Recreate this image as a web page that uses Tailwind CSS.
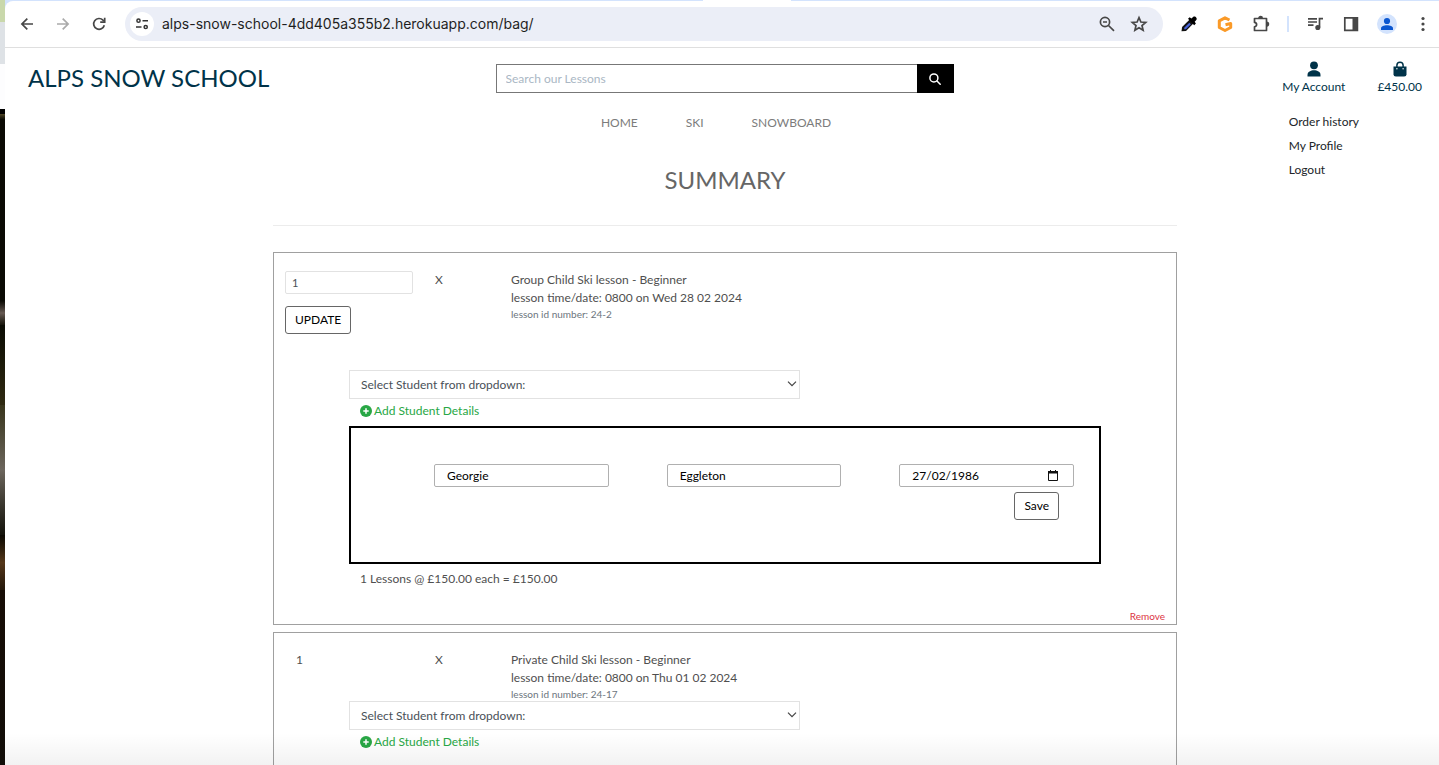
<!DOCTYPE html>
<html lang="en">
<head>
<meta charset="utf-8">
<title>Alps Snow School - Bag</title>
<script src="https://cdn.jsdelivr.net/npm/@tailwindcss/browser@4"></script>
</head>
<body class="flex h-screen overflow-hidden bg-white font-['Lato',sans-serif] text-xs leading-[18px] text-[#4f4f4f]">

<!-- Desktop showing behind the window -->
<div class="flex w-[5px] shrink-0 flex-col bg-black" aria-hidden="true">
  <div class="h-[22px] bg-[#c9d8ab]"></div>
  <div class="h-[42px] bg-[#dee2e6]"></div>
  <div class="h-[45px] bg-[#fdfdfe]"></div>
  <div class="h-[5px] bg-black"></div>
  <div class="flex-1 bg-linear-to-b from-[#4e4525] via-[#0b0a04] via-3% to-[#0a0a04]"></div>
  <div class="h-[24px] bg-linear-to-b from-[#0c0b06] via-[#675a53] to-[#17150c]"></div>
  <div class="h-[80px] bg-linear-to-b from-[#0b0c04] to-[#302a12]"></div>
  <div class="h-[130px] bg-linear-to-b from-[#39351c] via-[#6c665d] to-[#14130b]"></div>
  <div class="h-[55px] bg-linear-to-b from-[#0c0903] via-[#55371a] to-[#24170a]"></div>
  <div class="h-[175px] bg-linear-to-b from-[#170d06] to-[#110d08]"></div>
</div>

<div class="flex min-w-0 flex-1 flex-col">

  <!-- Browser toolbar -->
  <div class="flex h-px shrink-0 bg-[#d3e3fd]" aria-hidden="true">
    <div class="ml-[698px] h-px w-[88px] bg-white"></div>
  </div>
  <div class="shrink-0 bg-[#d3e3fd]">
  <div class="flex h-[47px] items-center rounded-tl-lg border-b border-[#dfdfdf] bg-white pr-[6px] text-[#474747]">
    <button aria-label="Back" class="ml-3 size-5"><svg viewBox="0 0 20 20" class="size-5" fill="none" stroke="#474747" stroke-width="1.700"><path d="M16 10H5M10.300 4.600 4.900 10l5.400 5.400"/></svg></button>
    <button aria-label="Forward" class="ml-4 size-5"><svg viewBox="0 0 20 20" class="size-5" fill="none" stroke="#ababab" stroke-width="1.700"><path d="M4 10h11M9.700 4.600 15.100 10l-5.400 5.400"/></svg></button>
    <button aria-label="Reload" class="ml-4 size-5"><svg viewBox="0 0 20 20" class="size-5" fill="none" stroke="#474747" stroke-width="1.700"><path d="M15.300 11.200A5.400 5.400 0 1 1 14 6.200l1 1"/><path d="M15.700 3.800v4.400h-4.500"/></svg></button>
    <div class="ml-4 flex h-[34px] flex-1 items-center rounded-full bg-[#ebeef7] pl-[5px] pr-[14px]">
      <button aria-label="View site information" class="flex size-6 shrink-0 items-center justify-center rounded-full bg-white"><svg viewBox="0 0 14 14" class="size-[14px]" fill="none" stroke="#333" stroke-width="1.500"><circle cx="3.500" cy="3.700" r="1.600"/><path d="M7.500 3.700H13M1 10h5.500"/><circle cx="10.700" cy="10" r="1.600"/></svg></button>
      <input aria-label="Address" value="alps-snow-school-4dd405a355b2.herokuapp.com/bag/" class="ml-2 min-w-0 flex-1 bg-transparent font-['Inter',sans-serif] text-sm text-[#1f1f1f] outline-none">
      <button aria-label="Zoom" class="mr-3 size-5"><svg viewBox="0 0 20 20" class="size-5" fill="none" stroke="#474747" stroke-width="1.700"><circle cx="8" cy="8" r="4.600"/><path d="m11.500 11.500 5.500 5.300M6 8h4"/></svg></button>
      <button aria-label="Bookmark this tab" class="size-5"><svg viewBox="0 0 20 20" class="size-5" fill="none" stroke="#474747" stroke-width="1.700"><path d="m10 3.600 1.900 4.400 4.800.4-3.700 3.100 1.100 4.700-4.100-2.500-4.100 2.500L7 11.500 3.300 8.400l4.800-.4z"/></svg></button>
    </div>
    <button aria-label="Colour picker" class="ml-4 size-5"><svg viewBox="0 0 20 20" class="size-5"><path d="m2.500 17.300.6-4.300 7.600-7.600 3.900 3.900-7.600 7.600z" fill="#111"/><path d="m5 15.300.5-1.800 4.800-4.800 1.600 1.600-5 5z" fill="#4763d8"/><path d="m9 4.800 1.700-1.600 1.700 1.200 1.700-1.400c1.900-1.500 4.700 1.300 3.200 3.100l-1.600 1.700 1.200 1.700-1.700 1.700z" fill="#000"/></svg></button>
    <button aria-label="Extension" class="ml-4 size-5"><svg viewBox="0 0 20 20" class="size-5" fill="none" stroke="#fa9a28" stroke-width="3" stroke-linejoin="round"><path d="M14.500 6 10 3.800 4.300 6.800v6.700l5.700 3 5.700-3V9.500l-5.200 1.300"/></svg></button>
    <button aria-label="Extensions" class="ml-4 size-5"><svg viewBox="0 0 20 20" class="size-5" fill="none" stroke="#474747" stroke-width="1.700" stroke-linejoin="round"><path d="M3.500 4.500h12v12h-12v-3.700c2.800-.4 2.800-4 0-4.400z"/><path d="M8 4.200a1.600 1.600 0 0 1 3.200 0M15.700 8.400a1.700 1.700 0 0 1 0 3.400" fill="#474747"/></svg></button>
    <span class="ml-4 h-4 w-0.5 bg-[#d3e3fd]"></span>
    <button aria-label="Media" class="ml-4 size-5"><svg viewBox="0 0 20 20" class="size-5" fill="none" stroke="#474747" stroke-width="1.700"><path d="M3 4.800h9M3 8h9M3 11.200h5.500M14.500 13.500V4.700H18"/><circle cx="12.800" cy="13.500" r="1.700" fill="#474747"/></svg></button>
    <button aria-label="Side panel" class="ml-4 size-5"><svg viewBox="0 0 20 20" class="size-5"><path d="M3.800 3.800h12.600v12.500H3.800z" fill="none" stroke="#474747" stroke-width="1.700"/><path d="M11.500 3.500h5v13h-5z" fill="#474747"/></svg></button>
    <button aria-label="Profile" class="ml-4 flex size-5 items-center justify-center rounded-full bg-[#d3e3fd]"><svg viewBox="0 0 20 20" class="size-5" fill="#0b57d0"><circle cx="10" cy="7" r="3.100"/><path d="M4 16v-1.700c0-4 12-4 12 0V16z"/></svg></button>
    <button aria-label="Menu" class="ml-4 size-5"><svg viewBox="0 0 20 20" class="size-5" fill="#474747"><circle cx="10" cy="4.500" r="1.600"/><circle cx="10" cy="10" r="1.600"/><circle cx="10" cy="15.500" r="1.600"/></svg></button>
  </div>
  </div>

  <div class="relative min-h-0 flex-1 overflow-hidden pl-[6px]">
    <header class="grid grid-cols-[1fr_458px_1fr] items-start pr-[17px]">
      <a href="#" class="mt-3 ml-[17px] text-2xl leading-9 text-[#003349]">ALPS SNOW SCHOOL</a>
      <form class="mt-4 ml-2 flex h-[29px] w-full border border-[#777]">
        <input type="search" aria-label="Search our Lessons" placeholder="Search our Lessons" class="min-w-0 flex-1 px-[9px] outline-none placeholder:text-[#aab7c4]">
        <button type="button" aria-label="Search" class="-my-px -mr-px flex w-[37px] items-center justify-center bg-black"><svg viewBox="0 0 12 12" class="size-3" fill="none" stroke="#fff" stroke-width="1.500" stroke-linecap="round"><circle cx="4.900" cy="4.900" r="4"/><path d="m8 8 3.200 3.200"/></svg></button>
      </form>
      <div class="mt-3 flex justify-end gap-8 text-[#003349]">
        <a href="#" class="flex flex-col items-center"><svg viewBox="0 0 14 16" class="my-px h-4 w-[14px]" fill="#003349"><circle cx="7" cy="4.300" r="3.900"/><path d="M.5 15.500v-1.500C.5 7.800 13.500 7.800 13.500 14v1.500z"/></svg>My Account</a>
        <a href="#" class="flex flex-col items-center"><svg viewBox="0 0 14 16" class="my-px h-4 w-[14px]"><path d="M.5 5.500h13v7.700a2.300 2.300 0 0 1-2.300 2.300H2.800A2.300 2.300 0 0 1 .5 13.200z" fill="#003349"/><path d="M3.900 7.500V4.300a3.100 3.100 0 0 1 6.200 0v3.200" fill="none" stroke="#003349" stroke-width="1.500"/><circle cx="3.900" cy="7.700" r=".7" fill="#fff"/><circle cx="10.100" cy="7.700" r=".7" fill="#fff"/></svg>£450.00</a>
      </div>
    </header>

    <ul class="absolute top-[62px] right-20 leading-6 text-[#212529]">
      <li><a href="#">Order history</a></li>
      <li><a href="#">My Profile</a></li>
      <li><a href="#">Logout</a></li>
    </ul>

    <nav class="mt-[18px] mr-[18px] flex justify-center gap-12 text-[#7c7c7c]">
      <a href="#">HOME</a><a href="#">SKI</a><a href="#">SNOWBOARD</a>
    </nav>

    <main class="mx-auto w-full max-w-[904px]">
      <h1 class="mt-[30px] text-center text-2xl leading-9 text-[#666]">SUMMARY</h1>
      <hr class="mt-[27px] mb-[26px] border-[#ececec]">

      <section class="relative flex flex-col border border-[#a0a0a0] px-[11px] pt-[18px] pb-9">
        <div class="flex h-[99px] items-start">
          <form class="flex w-[150px] flex-col items-start gap-3">
            <input type="text" aria-label="Quantity" value="1" class="h-[23px] w-32 rounded-xs border border-[#e2e2e2] px-[6px] text-[11px] text-[#495057]">
            <button type="button" class="h-7 rounded-[3px] border border-[#666] px-[9px] text-black">UPDATE</button>
          </form>
          <span class="w-[76px]">X</span>
          <div>
            <p>Group Child Ski lesson - Beginner</p>
            <p>lesson time/date: 0800 on Wed 28 02 2024</p>
            <p class="text-[10px] leading-[14px] text-[#6c757d]">lesson id number: 24-2</p>
          </div>
        </div>
        <div class="mx-16">
          <div class="relative w-3/5">
            <select aria-label="Student" class="h-[29px] w-full appearance-none border border-[#e2e2e2] bg-white px-[11px] text-[#495057]"><option>Select Student from dropdown:</option></select>
            <svg viewBox="0 0 10 6" class="pointer-events-none absolute top-[11px] right-[3px] h-[6px] w-[10px]" fill="none" stroke="#444" stroke-width="1.200"><path d="m1 .7 4 4 4-4"/></svg>
          </div>
          <button class="mt-[3px] flex h-[18px] items-center gap-[2px] pl-[11px] text-[#28a745]"><svg viewBox="0 0 12 12" class="size-3"><circle cx="6" cy="6" r="6" fill="#28a745"/><path d="M6 3.300v5.400M3.300 6h5.400" stroke="#fff" stroke-width="1.500"/></svg>Add Student Details</button>
          <form class="mt-[6px] h-[138px] border-2 border-black pt-9 pr-[25px] pl-[83px] text-black">
            <div class="grid grid-cols-3 gap-[58px]">
              <input type="text" aria-label="First name" value="Georgie" class="h-[23px] w-full rounded-xs border border-[#b0b0b0] px-3">
              <input type="text" aria-label="Last name" value="Eggleton" class="h-[23px] w-full rounded-xs border border-[#b0b0b0] px-3">
              <div class="flex h-[23px] items-center rounded-xs border border-[#b0b0b0] pr-[15px] pl-3">
                <input type="text" aria-label="Date of birth" value="27/02/1986" class="min-w-0 flex-1 outline-none">
                <button type="button" aria-label="Show date picker"><svg viewBox="0 0 10 11" class="block h-[11px] w-[10px]"><path d="M.5 1.500h9v9h-9z" fill="none" stroke="#111"/><path d="M0 1h10v2.500H0zM2 0h1v2H2zM7 0h1v2H7z" fill="#111"/></svg></button>
              </div>
            </div>
            <div class="mt-[5px] flex justify-end pr-[15px]"><button type="button" class="h-7 rounded-[3px] border border-[#666] px-[9px]">Save</button></div>
          </form>
          <p class="mt-[6px] pl-[11px]">1 Lessons @ £150.00 each = £150.00</p>
        </div>
        <a href="#" class="absolute right-[11px] bottom-px text-[10px] leading-[14px] text-[#dc3545]">Remove</a>
      </section>

      <section class="mt-[7px] h-[400px] border border-[#a0a0a0] px-[11px] pt-[18px]">
        <div class="flex">
          <span class="w-[150px] pl-[11px]">1</span>
          <span class="w-[76px]">X</span>
          <div>
            <p>Private Child Ski lesson - Beginner</p>
            <p>lesson time/date: 0800 on Thu 01 02 2024</p>
            <p class="text-[10px] leading-[14px] text-[#6c757d]">lesson id number: 24-17</p>
          </div>
        </div>
        <div class="mx-16">
          <div class="relative w-3/5">
            <select aria-label="Student" class="h-[29px] w-full appearance-none border border-[#e2e2e2] bg-white px-[11px] text-[#495057]"><option>Select Student from dropdown:</option></select>
            <svg viewBox="0 0 10 6" class="pointer-events-none absolute top-[11px] right-[3px] h-[6px] w-[10px]" fill="none" stroke="#444" stroke-width="1.200"><path d="m1 .7 4 4 4-4"/></svg>
          </div>
          <button class="mt-[3px] flex h-[18px] items-center gap-[2px] pl-[11px] text-[#28a745]"><svg viewBox="0 0 12 12" class="size-3"><circle cx="6" cy="6" r="6" fill="#28a745"/><path d="M6 3.300v5.400M3.300 6h5.400" stroke="#fff" stroke-width="1.500"/></svg>Add Student Details</button>
        </div>
      </section>
    </main>
    <div class="pointer-events-none absolute inset-x-0 bottom-0 h-8 bg-linear-to-t from-black/5 to-transparent" aria-hidden="true"></div>
  </div>
</div>
</body>
</html>
